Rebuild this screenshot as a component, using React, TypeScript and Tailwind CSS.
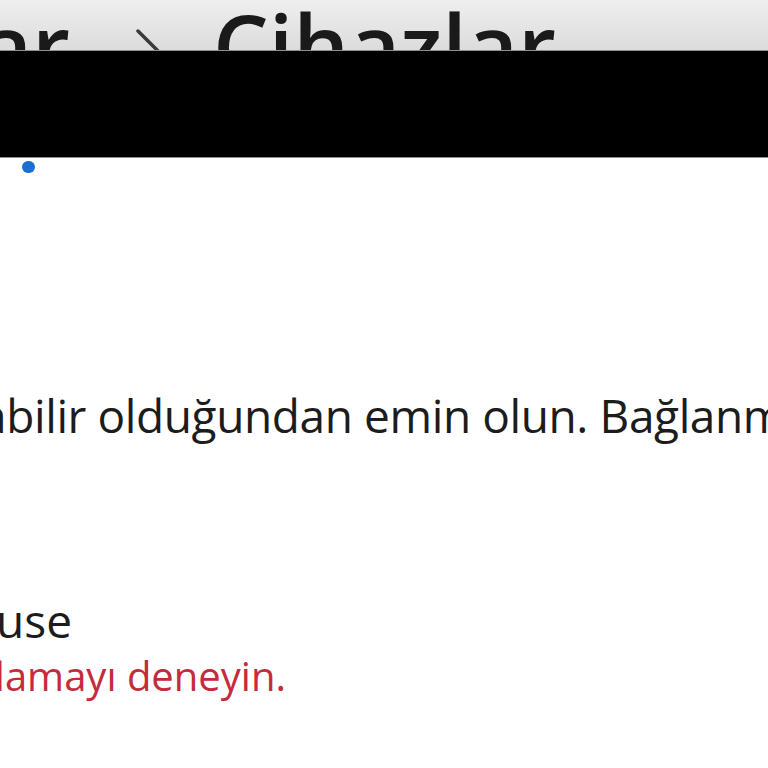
export default function App() {
  return (
    <div className="w-[768px] h-[768px] overflow-hidden bg-white font-['Open_Sans',sans-serif] text-[#1c1c1c]">
      <header className="h-[50px] overflow-hidden bg-gradient-to-b from-[#efefef] to-[#dcdcdc]">
        <div className="flex items-start whitespace-nowrap pt-[1px] text-[88px] font-semibold leading-none text-[#1a1a1a]">
          <div className="flex w-[70px] shrink-0 justify-end">
            <span>Bluetooth ve cihazlar</span>
          </div>
          <svg className="ml-[65px] mt-[28px] shrink-0" width="28" height="50" viewBox="0 0 28 50">
            <polyline points="3,2 25,24 3,46" fill="none" stroke="#3a3a3a" strokeWidth="3.5" strokeLinecap="round" strokeLinejoin="round" />
          </svg>
          <span className="ml-[50px]">Cihazlar</span>
        </div>
      </header>

      <div className="h-[108px] bg-black border-y border-[#8e8e8e]" />

      <div className="ml-[22px] mt-[3px] h-[12px] w-[13px] rounded-full bg-[#1a6fd0]" />

      <div className="mt-[219px] flex whitespace-nowrap text-[46px] leading-none tracking-[-0.4px]">
        <div className="flex w-[86px] shrink-0 justify-end">
          <span>Cihazınızın açık ve bulunabilir</span>
        </div>
        <span>&nbsp;olduğundan emin olun. Bağlanmaya hazır olmalıdır.</span>
      </div>

      <div className="mt-[159px] flex whitespace-nowrap text-[46px] leading-none">
        <div className="flex w-[72px] shrink-0 justify-end">
          <span>Mouse</span>
        </div>
      </div>

      <div className="mt-[13px] flex whitespace-nowrap text-[40px] leading-none text-[#c42b3c]">
        <div className="flex w-[286px] shrink-0 justify-end">
          <span>Tekrar bağlamayı deneyin.</span>
        </div>
      </div>
    </div>
  );
}
